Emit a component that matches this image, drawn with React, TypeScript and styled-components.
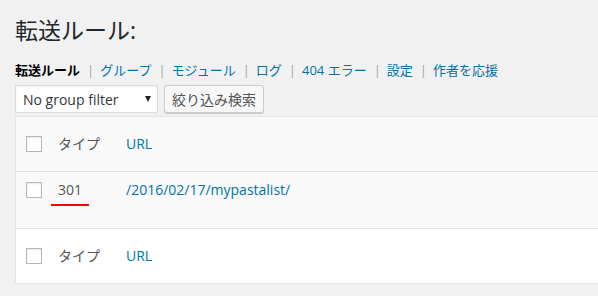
import React from 'react';
import styled, {createGlobalStyle} from "styled-components";

const GlobalStyle = createGlobalStyle`
  html, body {
    margin: 0;
    padding: 0;
    background: #f1f1f1;
    overflow: hidden;
  }
  body {
    font-family: "Open Sans", "Noto Sans CJK JP", sans-serif;
    color: #444;
  }
`

const navItems = [
    {label: "転送ルール", current: true},
    {label: "グループ"},
    {label: "モジュール"},
    {label: "ログ"},
    {label: "404 エラー"},
    {label: "設定"},
    {label: "作者を応援"},
]

type RowType = {
    type: string
    url: string
}

const rows: RowType[] = [
    {type: "301", url: "/2016/02/17/mypastalist/"},
]

export default function App() {
    return (
        <>
            <GlobalStyle/>
            <Wrap>
                <Title>転送ルール:</Title>
                <SubNav>
                    {navItems.map((item, i) => (
                        <NavItem key={item.label}>
                            {item.current
                                ? <Current>{item.label}</Current>
                                : <NavLink href={"#"}>{item.label}</NavLink>}
                            {i < navItems.length - 1 && <Separator>|</Separator>}
                        </NavItem>
                    ))}
                </SubNav>
                <Filters>
                    <FakeSelect>
                        <span>No group filter</span>
                        <Arrow/>
                    </FakeSelect>
                    <Button>絞り込み検索</Button>
                </Filters>
                <Table>
                    <thead>
                    <HeadRow>
                        <CheckCell><Checkbox/></CheckCell>
                        <TypeCell>タイプ</TypeCell>
                        <UrlCell><ColLink href={"#"}>URL</ColLink></UrlCell>
                    </HeadRow>
                    </thead>
                    <tbody>
                    {rows.map(r => (
                        <BodyRow key={r.url}>
                            <CheckCell $top><Checkbox/></CheckCell>
                            <TypeCell $top><Marked>{r.type}</Marked></TypeCell>
                            <UrlCell $top><ColLink href={"#"}>{r.url}</ColLink></UrlCell>
                        </BodyRow>
                    ))}
                    </tbody>
                    <tfoot>
                    <FootRow>
                        <CheckCell><Checkbox/></CheckCell>
                        <TypeCell>タイプ</TypeCell>
                        <UrlCell><ColLink href={"#"}>URL</ColLink></UrlCell>
                    </FootRow>
                    </tfoot>
                </Table>
            </Wrap>
        </>
    );
}

const Wrap = styled.div`
  padding: 16px 0 0 15px;
  width: 583px;
`

const Title = styled.h1`
  margin: 0;
  font-size: 23px;
  font-weight: 400;
  line-height: 29px;
  color: #23282d;
`

const SubNav = styled.ul`
  list-style: none;
  margin: 16px 0 0;
  padding: 0;
  display: flex;
  font-size: 13px;
  line-height: 18px;
`

const NavItem = styled.li`
  display: flex;
  white-space: nowrap;
`

const Current = styled.span`
  font-weight: 700;
  color: #000;
`

const NavLink = styled.a`
  color: #0073aa;
  text-decoration: none;
`

const Separator = styled.span`
  color: #a0a5aa;
  padding: 0 6px 0 7px;
`

const Filters = styled.div`
  display: flex;
  gap: 6px;
  margin-top: 6px;
`

const FakeSelect = styled.div`
  box-sizing: border-box;
  width: 143px;
  height: 28px;
  display: flex;
  align-items: center;
  justify-content: space-between;
  padding: 0 6px 0 7px;
  background: #fff;
  border: 1px solid #ddd;
  box-shadow: inset 0 1px 2px rgba(0, 0, 0, .07);
  font-size: 14px;
  color: #32373c;
`

const Arrow = styled.span`
  width: 0;
  height: 0;
  border-left: 3.5px solid transparent;
  border-right: 3.5px solid transparent;
  border-top: 6px solid #222;
`

const Button = styled.button`
  box-sizing: border-box;
  height: 28px;
  padding: 0 7px;
  border: 1px solid #ccc;
  border-radius: 3px;
  background: #f7f7f7;
  box-shadow: 0 1px 0 #ccc;
  font-family: "Open Sans", "Noto Sans CJK JP", sans-serif;
  font-size: 14px;
  color: #555;
`

const Table = styled.table`
  margin-top: 3px;
  width: calc(100% + 20px);
  border-spacing: 0;
  border: 1px solid #e5e5e5;
  background: #fff;
  box-shadow: 0 1px 1px rgba(0, 0, 0, .04);
  table-layout: fixed;
  font-size: 14px;
  line-height: 20px;
`

const HeadRow = styled.tr`
  height: 55px;
  background: #f9f9f9;

  td {
    border-bottom: 1px solid #e1e1e1;
  }
`

const BodyRow = styled.tr`
  height: 57px;
  background: #f9f9f9;

  td {
    border-bottom: 1px solid #e1e1e1;
  }
`

const FootRow = styled.tr`
  height: 54px;
  background: #fff;
`

const Cell = styled.td<{ $top?: boolean }>`
  padding: 0 0 0 8px;
  vertical-align: ${p => p.$top ? "top" : "middle"};
  padding-top: ${p => p.$top ? "8px" : "0"};
  color: #555;
`

const CheckCell = styled(Cell)`
  width: 24px;
  padding-left: 10px;
  padding-top: ${p => p.$top ? "10px" : "0"};

  span {
    display: block;
  }
`

const TypeCell = styled(Cell)`
  width: 60px;
`

const UrlCell = styled(Cell)``

const Checkbox = styled.span`
  box-sizing: border-box;
  width: 16px;
  height: 16px;
  border: 1px solid #b4b9be;
  background: #fff;
  box-shadow: inset 0 1px 2px rgba(0, 0, 0, .1);
`

const ColLink = styled.a`
  color: #0073aa;
  text-decoration: none;
`

const Marked = styled.span`
  position: relative;
  display: inline-block;

  &::after {
    content: "";
    position: absolute;
    left: -7px;
    top: 24px;
    width: 38px;
    height: 2px;
    background: #f00;
  }
`
